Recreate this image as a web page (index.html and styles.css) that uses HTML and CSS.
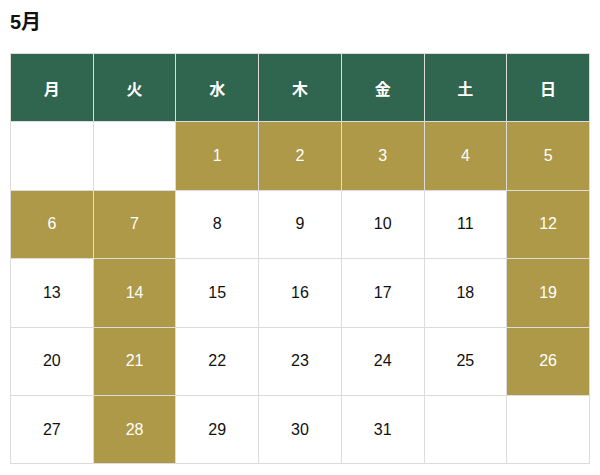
FILE: index.html
```html
<!DOCTYPE html>
<html lang="ja">
<head>
<meta charset="utf-8">
<link rel="stylesheet" href="styles.css">
</head>
<body>
<div class="page">
  <h2 class="title">5月</h2>
  <table class="cal">
    <thead>
      <tr><th>月</th><th>火</th><th>水</th><th>木</th><th>金</th><th>土</th><th>日</th></tr>
    </thead>
    <tbody>
      <tr><td></td><td></td><td class="hl">1</td><td class="hl">2</td><td class="hl">3</td><td class="hl">4</td><td class="hl">5</td></tr>
      <tr><td class="hl">6</td><td class="hl">7</td><td>8</td><td>9</td><td>10</td><td>11</td><td class="hl">12</td></tr>
      <tr><td>13</td><td class="hl">14</td><td>15</td><td>16</td><td>17</td><td>18</td><td class="hl">19</td></tr>
      <tr><td>20</td><td class="hl">21</td><td>22</td><td>23</td><td>24</td><td>25</td><td class="hl">26</td></tr>
      <tr><td>27</td><td class="hl">28</td><td>29</td><td>30</td><td>31</td><td></td><td></td></tr>
    </tbody>
  </table>
</div>
</body>
</html>
```
FILE: styles.css
```css
html, body {
  margin: 0;
  padding: 0;
  background: #fff;
}
.page {
  padding: 10px 10px 0 10px;
  font-family: "Liberation Sans", Arial, "Noto Sans CJK JP", sans-serif;
  color: #111;
}
.title {
  margin: 0;
  font-size: 20px;
  line-height: 24px;
  font-weight: bold;
  height: 43px;
}
.cal {
  width: 580px;
  border-collapse: collapse;
  table-layout: fixed;
}
.cal th, .cal td {
  border: 1px solid #dcdcdc;
  height: 67.4px;
  padding: 0;
  text-align: center;
  vertical-align: middle;
  font-size: 16px;
}
.cal th {
  background: #30664f;
  color: #fff;
  font-weight: bold;
  font-family: "Noto Sans CJK JP", sans-serif;
}
.cal td {
  color: #111;
}
.cal td.hl {
  background: #ad9948;
  color: #fff;
}
```
